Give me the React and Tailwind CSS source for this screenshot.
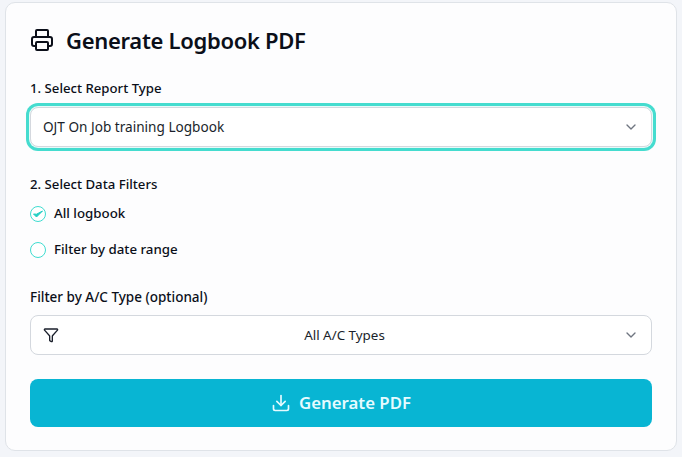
import { Printer, ChevronDown, Funnel, Download } from 'lucide-react';

export default function App() {
  return (
    <div className="h-[457px] w-[682px] overflow-hidden bg-[#f3f5f9] pl-[5px] pr-[5px] pt-[2px] font-['Noto_Sans',sans-serif] text-[#0b0f19]">
      <div className="h-[449px] rounded-[10px] border border-[#dfe3e8] bg-[#fdfdfe] px-6 pt-[23px]">
        {/* Header */}
        <div className="flex h-[28px] items-center gap-[12px]">
          <Printer size={24} strokeWidth={2} className="text-[#0b0f19]" />
          <h1 className="text-[22px] leading-7 font-semibold tracking-[-0.3px]">Generate Logbook PDF</h1>
        </div>

        {/* Report type */}
        <p className="mt-[25px] text-[13.2px] leading-[18px] font-medium">1. Select Report Type</p>
        <div className="mt-[10px] flex h-[40px] items-center justify-between rounded-lg border border-[#d4d8de] bg-white pl-[12px] pr-[12px] shadow-[0_0_0_1px_#e6fbf9,0_0_0_4px_#45dccf]">
          <span className="text-[13.6px] text-[#1a1f2b]">OJT On Job training Logbook</span>
          <ChevronDown size={16} className="text-[#6f7580]" />
        </div>

        {/* Data filters */}
        <p className="mt-[28px] text-[13.2px] leading-[18px] font-medium">2. Select Data Filters</p>
        <div className="mt-[11px] flex flex-col gap-[16px]">
          <label className="flex h-[20px] items-center gap-2">
            <span className="flex h-4 w-4 items-center justify-center rounded-full border border-[#3fdcd0] bg-white">
              <svg width="12" height="10" viewBox="0 0 12 10" className="text-[#22cfc3]">
                <path d="M1.5 5 L4.5 8 L10.5 2 L4.5 5.2 Z" fill="currentColor" stroke="currentColor" strokeWidth="1" strokeLinejoin="round" />
              </svg>
            </span>
            <span className="text-[13.3px] font-medium">All logbook</span>
          </label>
          <label className="flex h-[20px] items-center gap-2">
            <span className="h-4 w-4 rounded-full border border-[#3fdcd0] bg-white" />
            <span className="text-[13.3px] font-medium">Filter by date range</span>
          </label>
        </div>

        {/* A/C type */}
        <p className="mt-[28px] text-[13.5px] leading-[18px] font-medium">Filter by A/C Type (optional)</p>
        <div className="mt-[9px] flex h-[40px] items-center rounded-lg border border-[#d4d8de] bg-white pl-[12px] pr-[12px]">
          <Funnel size={16} className="text-[#1a1f2b]" />
          <span className="flex-1 pl-[7px] text-center text-[13.4px] text-[#1a1f2b]">All A/C Types</span>
          <ChevronDown size={16} className="text-[#6f7580]" />
        </div>

        <button className="mt-[24px] flex h-[48px] w-full items-center justify-center gap-2 rounded-lg bg-[#08b5d3] text-[16.8px] font-semibold text-[#e6fbff]">
          <Download size={20} />
          Generate PDF
        </button>
      </div>
    </div>
  );
}
